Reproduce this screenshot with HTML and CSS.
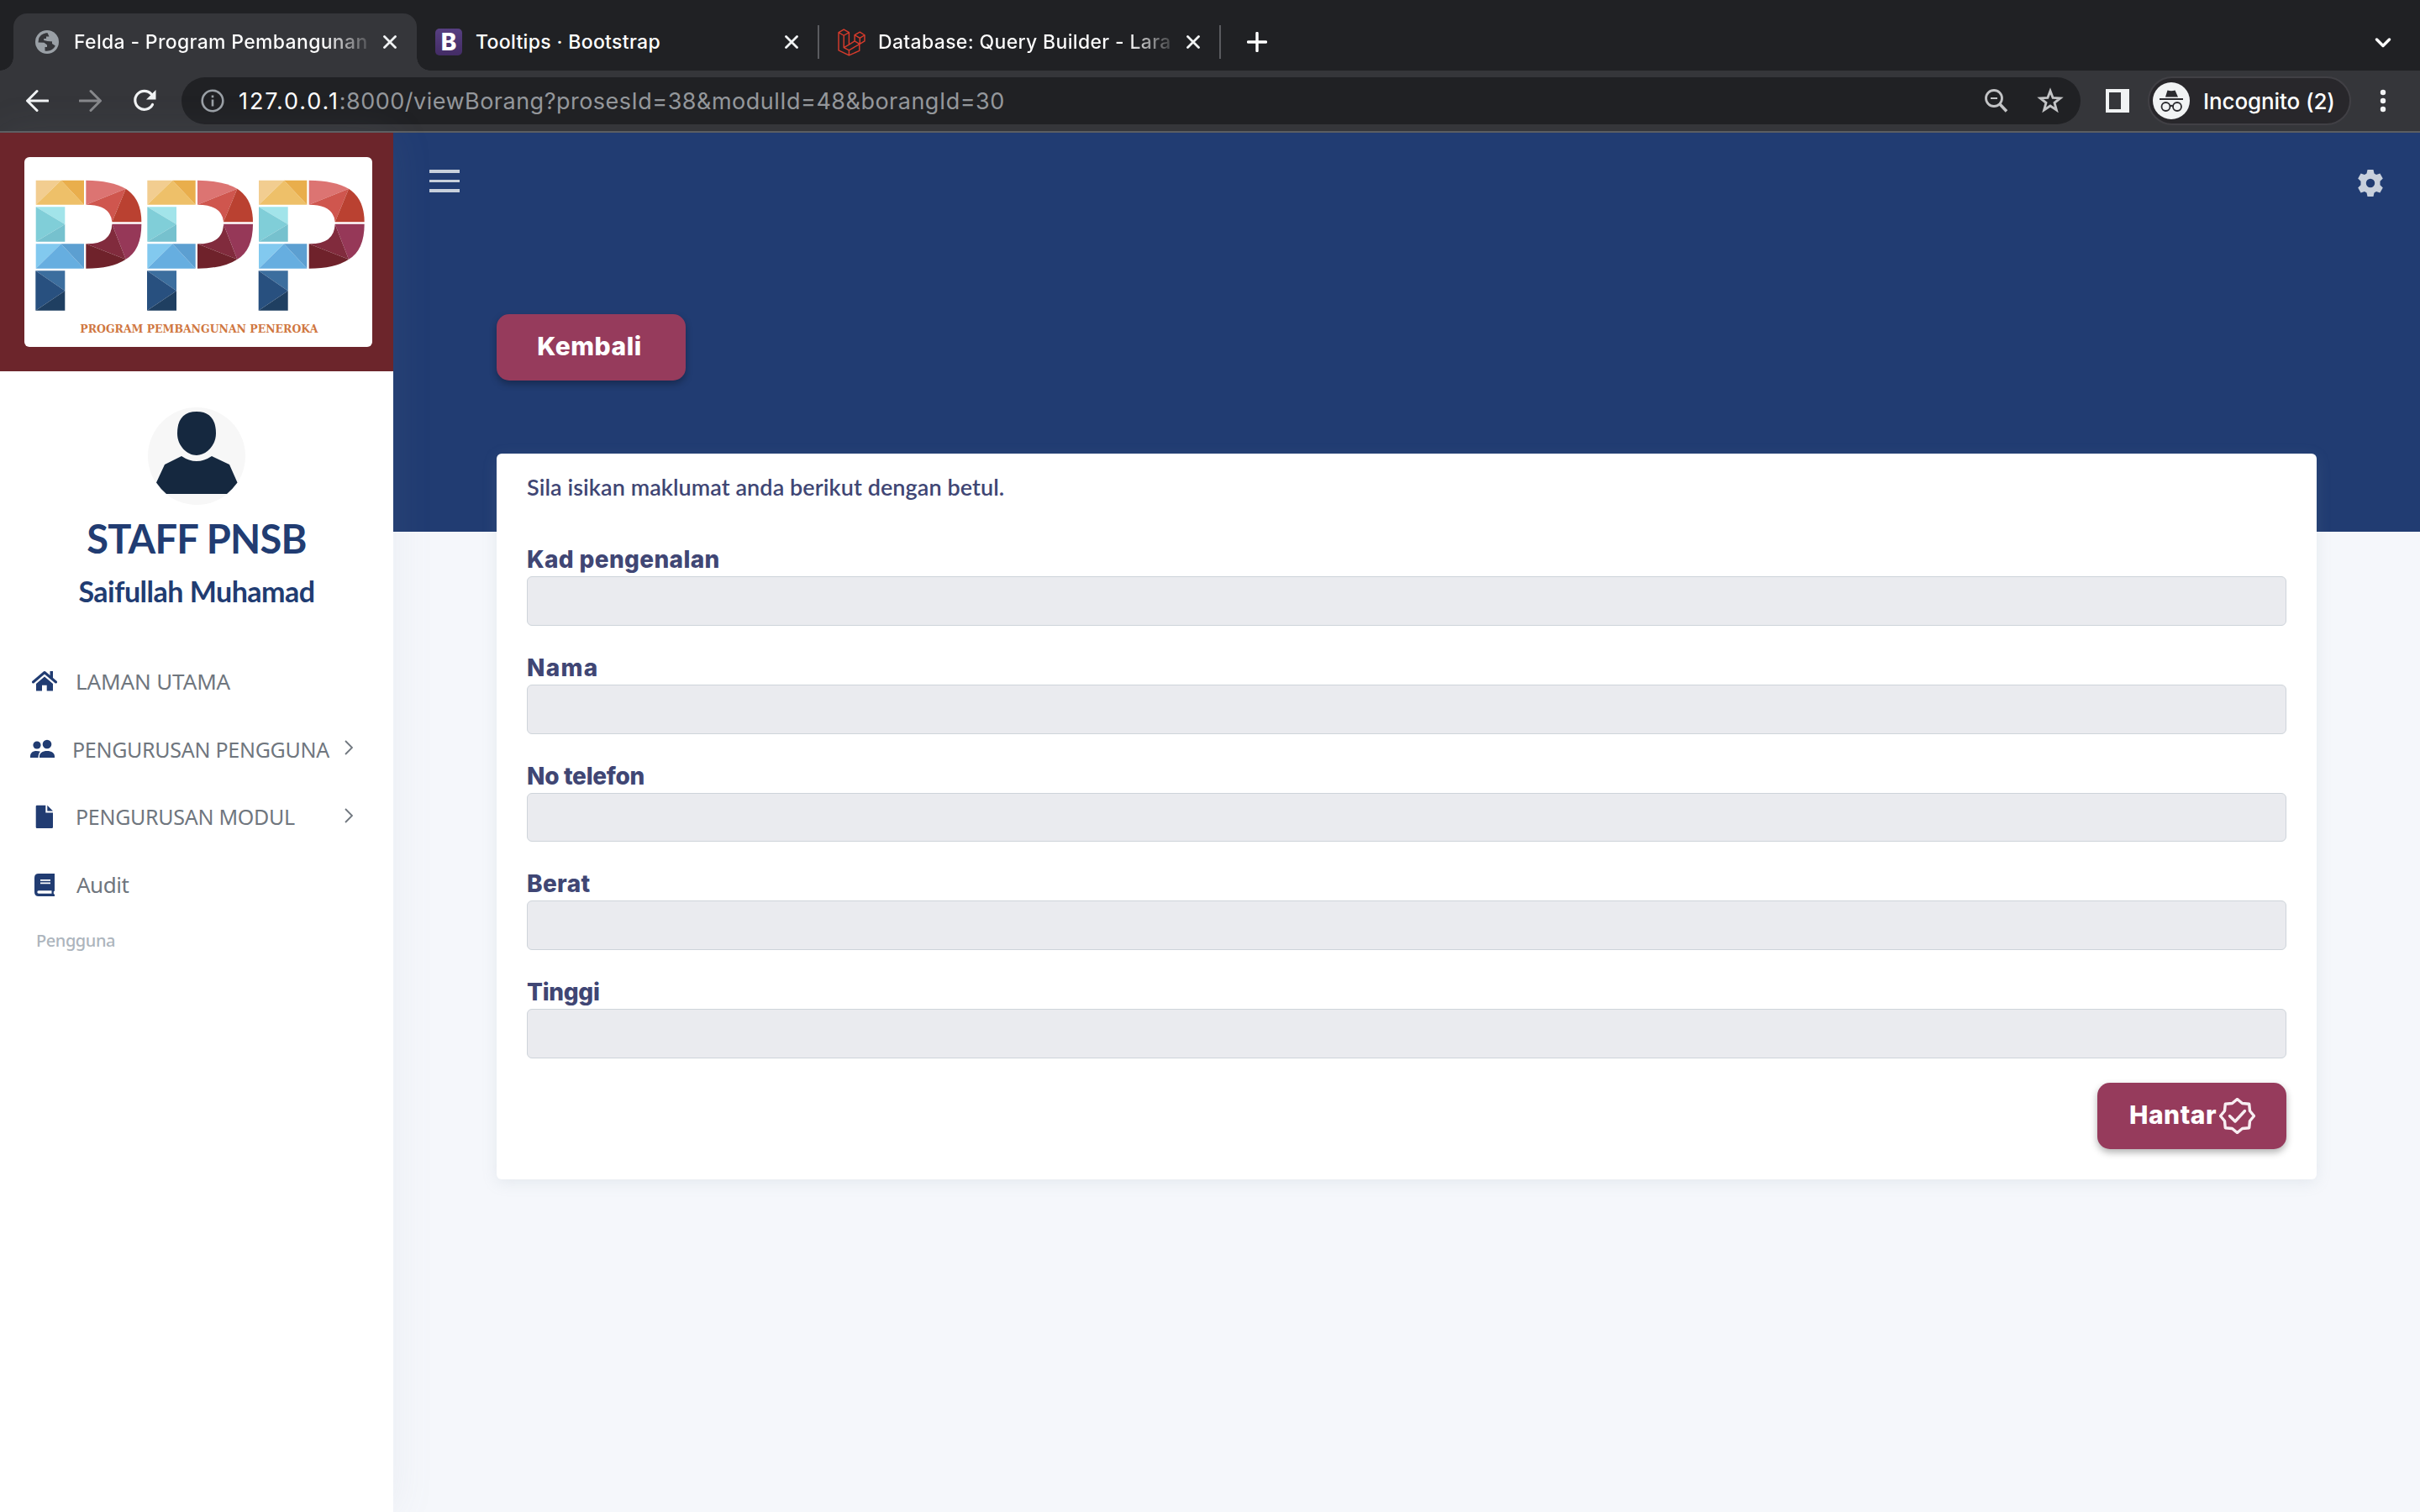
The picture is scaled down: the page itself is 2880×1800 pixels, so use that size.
FILE: index.html
```html
<!DOCTYPE html>
<html lang="ms">
<head>
<meta charset="utf-8">
<title>Felda - Program Pembangunan Peneroka</title>
<link rel="stylesheet" href="styles.css">
</head>
<body>
<div class="tabstrip">
  <div class="tab tab-active">
    <svg class="globe" viewBox="0 0 28 28"><circle cx="14" cy="14" r="14" fill="#9aa0a6"/><path d="M14.6 3.2C10 3.2 6 5.600 4.200 9.500L3.500 14.500L10.500 14.700L14 17.500V20H11.500V24.500C17 25.600 22 22.500 23.800 18.500L20 16V13H14.500L10.200 12V10H13V7.500H16.500Z" fill="#35363a"/><path d="M14.500 13V10.500L17 9.500V7L16.500 3.200L20 5L24 9.500L24.800 14L21.500 16V13.500Z" fill="#9aa0a6"/></svg>
    <span class="tab-title fade">Felda - Program Pembangunan</span>
    <svg class="close" viewBox="0 0 16 16"><path d="M1.500 1.500l13 13M14.500 1.500l-13 13"/></svg>
  </div>
  <div class="tab">
    <span class="bs-icon">B</span>
    <span class="tab-title">Tooltips · Bootstrap</span>
    <svg class="close" viewBox="0 0 16 16"><path d="M1.500 1.500l13 13M14.500 1.500l-13 13"/></svg>
  </div>
  <span class="sep"></span>
  <div class="tab tab-laravel">
    <svg class="laravel" viewBox="0 0 32 32"><path d="M1 4.500L7 1l6 3.500v14l6.500-4V7.500L25.500 4l5.500 3.500v7l-6 3.500v7.500L13 31 1 25zM1 4.500l6 3.500 6-3.500M7 8v14l6 3 12-7M13 25v6M7 22l6-3.500M19.500 7.500l6 3.500 5.500-3.500M25.500 11v7l-6-3.500"/></svg>
    <span class="tab-title fade">Database: Query Builder - Lara</span>
    <svg class="close" viewBox="0 0 16 16"><path d="M1.500 1.500l13 13M14.500 1.500l-13 13"/></svg>
  </div>
  <span class="sep"></span>
  <svg class="plus" viewBox="0 0 24 24"><path d="M12 1.500v21M1.500 12h21"/></svg>
  <svg class="tab-search" viewBox="0 0 20 12"><path d="M2.500 2l7.500 7.500L17.500 2"/></svg>
</div>
<div class="toolbar">
  <svg class="nav-icon" viewBox="0 0 28 28"><path d="M27 14H3M14 2.500L2.500 14 14 25.500" stroke="#f1f3f4"/></svg>
  <svg class="nav-icon" viewBox="0 0 28 28"><path d="M1 14h24M14 2.500L25.500 14 14 25.500" stroke="#87888b"/></svg>
  <svg class="nav-icon" viewBox="0 0 28 28"><path d="M23.500 18.500A11 11 0 1 1 22 6" stroke="#f1f3f4" stroke-width="3.200"/><path d="M27.500 1v11.500H16z" fill="#f1f3f4" stroke="none"/></svg>
  <div class="omnibox">
    <svg class="info" viewBox="0 0 28 28"><circle cx="14" cy="14" r="12.300"/><path d="M14 12.500v8M14 7.500v2.800"/></svg>
    <span class="url"><b>127.0.0.1</b>:8000/viewBorang?prosesId=38&amp;modulId=48&amp;borangId=30</span>
    <svg class="mag" viewBox="0 0 28 28"><circle cx="11" cy="11" r="9.500"/><path d="M7 11h8" stroke-width="2"/><path d="M18 18l8 8.500" stroke-width="3.500"/></svg>
    <svg class="star" viewBox="0 0 30 30"><path d="M15 4l2.900 7.700 8.200.4-6.400 5.100 2.200 8L15 20.700l-6.900 4.500 2.200-8-6.400-5.100 8.200-.4z"/></svg>
  </div>
  <svg class="panel" viewBox="0 0 28 28"><path d="M0 0h28v28H0zM4 4v20h14V4z" fill="#f1f3f4" fill-rule="evenodd"/></svg>
  <div class="profile">
    <svg viewBox="0 0 44 44"><circle cx="22" cy="22" r="22" fill="#f1f3f4"/><g fill="#2b2b2f"><path d="M15 17.500L17.500 9.500Q22 11 26.500 9.500L30 17.500z"/><path d="M8 19h28v2H8z"/></g><g fill="none" stroke="#2b2b2f" stroke-width="1.800"><circle cx="15.500" cy="29" r="5"/><circle cx="29" cy="29" r="5"/><path d="M20.500 28.500q1.700-1.500 3.500 0"/></g></svg>
    <span>Incognito (2)</span>
  </div>
  <svg class="dots" viewBox="0 0 8 28"><circle cx="4" cy="4" r="3.200"/><circle cx="4" cy="14" r="3.200"/><circle cx="4" cy="24" r="3.200"/></svg>
</div>
<div class="page">
  <aside class="sidebar">
    <div class="brand">
      <svg class="logo" viewBox="87 93 1242 678">
        <defs><g id="p">
          <path fill="#f2cd90" d="M128 176h90l-90 87z"/><path fill="#eec069" d="M218 176l82 87H128z"/><path fill="#e9ae4c" d="M218 176h82v87z"/>
          <path fill="#a2e4ea" d="M128 271h104v62z"/><path fill="#80ced8" d="M128 271l104 62-104 62z"/><path fill="#76c1ce" d="M232 333v62H128z"/>
          <path fill="#82c9ef" d="M128 403h90l-90 88z"/><path fill="#66aee0" d="M218 403l82 88H128z"/><path fill="#5c9fd1" d="M218 403h82v88z"/>
          <path fill="#3c6e9e" d="M127 499h105v72z"/><path fill="#28507f" d="M127 499l105 72-105 70z"/><path fill="#1f3f61" d="M232 571v70H127z"/>
          <path fill="#dc7472" d="M307 176Q399 177 449 206L307 263z"/><path fill="#cf564e" d="M449 206L400 325Q395 263 307 263z"/><path fill="#ba4131" d="M449 206Q505 242 505 325H400z"/>
          <path fill="#963858" d="M505 332H400l49 126Q505 425 505 332z"/><path fill="#812b3d" d="M400 332l49 126-142-55Q398 404 400 332z"/><path fill="#6f222b" d="M307 403l142 55Q399 491 307 491z"/>
        </g></defs>
        <use href="#p"/><use href="#p" x="398"/><use href="#p" x="796"/>
        <text class="logo-text" x="286" y="720" textLength="849" lengthAdjust="spacingAndGlyphs">PROGRAM PEMBANGUNAN PENEROKA</text>
      </svg>
    </div>
    <svg class="avatar" viewBox="0 0 116 116"><circle cx="58" cy="58" r="58" fill="#f7f7f7"/><path fill="#15283f" d="M58 5C74 5 81 15 81 31C81 46 69 57 58 57C47 57 35 46 35 31C35 15 42 5 58 5zM40 58Q58 70 76 58L97 68L106.500 89.500Q101 97 94 103H22Q15 97 10 89.500L20 68z"/></svg>
    <h1 class="role">STAFF PNSB</h1>
    <h2 class="user">Saifullah Muhamad</h2>
    <nav class="menu">
      <a class="item"><svg class="icon" viewBox="0 0 32 32"><path d="M23.500 4H27v9l-3.500-3z"/><path d="M3.500 17L17 5.500 30.500 17" fill="none" stroke="#213c72" stroke-width="3" stroke-linecap="round" stroke-linejoin="round"/><path d="M17 10.500L27 19v8.500h-7.300v-6.800H14v6.800H7V19z"/></svg><span>LAMAN UTAMA</span></a>
      <a class="item item-users"><svg class="icon" viewBox="0 0 32 32"><circle cx="8" cy="11" r="4.600"/><circle cx="20" cy="10" r="5.300"/><path d="M0 26v-1.500C0 20 3.500 18 7 18q3 0 5 .8Q9.500 21 9.500 26zM11 26v-1.500c0-4 3.500-6.500 9-6.500s9 2.500 9 6.500V26z"/></svg><span>PENGURUSAN PENGGUNA</span><svg class="chev" viewBox="0 0 10 18"><path d="M1 1l8 8-8 8"/></svg></a>
      <a class="item item-modul"><svg class="icon" viewBox="0 0 32 32"><path d="M8 2.700h10.300v8.800h8.700v17.200q0 1.300-1.300 1.300H8q-1.300 0-1.300-1.300V4q0-1.300 1.300-1.300zM20.300 2.700L27 9.500h-6.700z"/></svg><span>PENGURUSAN MODUL</span><svg class="chev" viewBox="0 0 10 18"><path d="M1 1l8 8-8 8"/></svg></a>
      <a class="item item-audit"><svg class="icon" viewBox="0 0 32 32"><path fill-rule="evenodd" d="M10 3h19v20.500l-1.200 1v2.200L29 28v2H10q-5 0-5-5V8q0-5 5-5zM12 10v1.800h12V10zM12 13.500v1.800h12v-1.800zM10 23.300q-1.700 0-1.700 1.700T10 26.700h15.500v-3.400z"/></svg><span>Audit</span></a>
    </nav>
    <div class="menu-heading">Pengguna</div>
  </aside>
  <main class="main">
    <header class="hero">
      <div class="topbar">
        <div class="burger"><i></i><i></i><i></i></div>
        <svg class="gear" viewBox="0 0 30 32"><path fill-rule="evenodd" d="M11.500 0h7l1 4.500 2.500 1.400 4.400-1.400 3.400 6-3.300 3.200v4.600l3.300 3.200-3.400 6-4.400-1.400-2.500 1.400-1 4.500h-7l-1-4.500L8 26.100l-4.400 1.400-3.400-6 3.300-3.200v-4.600L.2 10.500l3.400-6L8 5.900l2.500-1.400zM15 10.800a5.200 5.200 0 1 0 0 10.400 5.200 5.200 0 0 0 0-10.400z"/></svg>
      </div>
      <button class="btn">Kembali</button>
    </header>
    <section class="card">
      <p class="lead">Sila isikan maklumat anda berikut dengan betul.</p>
      <form class="form">
        <div class="field"><label>Kad pengenalan</label><input disabled></div>
        <div class="field wide"><label>Nama</label><input disabled></div>
        <div class="field tight"><label>No telefon</label><input disabled></div>
        <div class="field"><label>Berat</label><input disabled></div>
        <div class="field tight"><label>Tinggi</label><input disabled></div>
      </form>
      <button class="btn btn-submit" type="button"><span>Hantar</span><svg viewBox="-21.500 -21.500 43 43"><path d="M0-20L6-15 14.200-14.200 15-6 20 0 15 6 14.200 14.200 6 15 0 20-6 15-14.200 14.200-15 6-20 0-15-6-14.200-14.200-6-15z"/><path d="M-9 0l6.500 6.500L9-6"/></svg></button>
    </section>
  </main>
</div>
</body>
</html>
```
FILE: styles.css
```css
* { box-sizing: border-box; }
body {
  margin: 0;
  width: 2880px;
  height: 1800px;
  overflow: hidden;
  display: flex;
  flex-direction: column;
  font-family: Inter, sans-serif;
  background: #f5f7fb;
}
svg { display: block; flex: none; }

/* Browser tabs */
.tabstrip {
  height: 84px;
  flex: none;
  padding: 16px 35px 0 16px;
  display: flex;
  align-items: center;
  background: #202124;
}
.tab {
  position: relative;
  width: 477px;
  height: 68px;
  padding: 0 23px 0 22px;
  display: flex;
  align-items: center;
  color: #fff;
}
.tab-active {
  width: 480px;
  padding: 0 24px 0 26px;
  background: #35363a;
  border-radius: 16px 16px 0 0;
}
.tab-active::before,
.tab-active::after {
  content: "";
  position: absolute;
  bottom: 0;
  width: 16px;
  height: 16px;
}
.tab-active::before { left: -16px; background: radial-gradient(circle at 0 0, #202124 15.5px, #35363a 16px); }
.tab-active::after { right: -16px; background: radial-gradient(circle at 100% 0, #202124 15.5px, #35363a 16px); }
.globe { width: 28px; height: 28px; margin-right: 18px; }
.bs-icon {
  width: 32px;
  height: 32px;
  margin-right: 16px;
  border-radius: 5px;
  background: linear-gradient(#573f81, #432c65);
  font-weight: 800;
  font-size: 28px;
  line-height: 32px;
  text-align: center;
}
.laravel { width: 33px; height: 33px; margin-right: 15px; fill: none; stroke: #d63b2c; stroke-width: 1.4; stroke-linejoin: round; }
.tab-title {
  font-size: 23px;
  font-weight: 500;
  line-height: 32px;
  letter-spacing: 0.33px;
  white-space: nowrap;
}
.fade { color: transparent; background: linear-gradient(90deg, #fff 85%, rgba(255,255,255,.15)); background-clip: text; -webkit-background-clip: text; }
.close { width: 16px; height: 16px; margin-left: auto; fill: none; stroke: #f1f3f4; stroke-width: 2.8; stroke-linecap: round; }
.sep { width: 2px; height: 40px; background: #5a5b5f; }
.tab-laravel { width: 476px; }
.plus { width: 24px; height: 24px; margin-left: 31px; stroke: #fff; stroke-width: 3.4; stroke-linecap: round; }
.tab-search { width: 20px; height: 12px; margin: 2px -1px 0 auto; fill: none; stroke: #fff; stroke-width: 3.4; stroke-linecap: round; stroke-linejoin: round; }

/* Browser toolbar */
.toolbar {
  height: 74px;
  flex: none;
  padding: 0 40px 0 30px;
  display: flex;
  align-items: center;
  background: #35363a;
  border-bottom: 2px solid #5c5e61;
}
.nav-icon { width: 28px; height: 28px; margin-right: 36px; fill: none; stroke-width: 3; stroke-linecap: round; stroke-linejoin: round; }
.nav-icon:nth-child(3) { margin-right: 30px; }
.omnibox {
  width: 2260px;
  height: 56px;
  padding: 0 20px 0 23px;
  display: flex;
  align-items: center;
  border-radius: 28px;
  background: #202124;
}
.info { width: 28px; height: 28px; fill: none; stroke: #9aa0a6; stroke-width: 2.6; }
.url { margin-left: 17px; padding-top: 1px; font-size: 27px; line-height: 40px; letter-spacing: 0.49px; color: #94979b; white-space: nowrap; }
.url b { font-weight: 400; letter-spacing: 1.9px; color: #fff; }
.mag { width: 28px; height: 28px; margin-left: auto; fill: none; stroke: #c3c4c6; stroke-width: 2.8; }
.star { width: 32px; height: 32px; margin-left: 34px; fill: none; stroke: #c3c4c6; stroke-width: 2.7; }
.panel { width: 28px; height: 28px; margin-left: 30px; }
.profile {
  width: 242px;
  height: 58px;
  margin: 0 34px 0 22px;
  padding-left: 4px;
  display: flex;
  align-items: center;
  border: 2px solid #414045;
  border-radius: 29px;
  background: #28272b;
  color: #fff;
  font-size: 26px;
  font-weight: 500;
  letter-spacing: -0.1px;
}
.profile svg { width: 44px; height: 44px; margin-right: 16px; }
.dots { width: 8px; height: 28px; fill: #f1f3f4; }

/* Page */
.page { flex: 1; display: flex; }
.sidebar {
  width: 468px;
  flex: none;
  display: flex;
  flex-direction: column;
  background: #fff;
  box-shadow: 0 0 48px rgba(136, 152, 170, .1);
  z-index: 1;
}
.brand { height: 284px; padding: 29px; background: #6c252b; }
.logo { width: 414px; height: 226px; border-radius: 6px; background: #fff; }
.logo-text { font: 700 37px "DejaVu Serif", serif; fill: #d07741; }
.avatar { width: 116px; height: 116px; margin: 43px auto 0; }
.role, .user { margin: 0; font-family: Lato, sans-serif; font-weight: 700; text-align: center; color: #213c72; }
.role { margin-top: 10px; font-size: 47px; line-height: 60px; letter-spacing: -0.75px; }
.user { margin-top: 13px; font-size: 34px; line-height: 40px; letter-spacing: -0.5px; }
.menu { margin-top: 47px; font-family: "Noto Sans", sans-serif; }
.item {
  height: 80.6px;
  padding: 0 48px 0 36px;
  display: flex;
  align-items: center;
  color: #6f767e;
  font-size: 26px;
  white-space: nowrap;
  letter-spacing: -0.12px;
}
.icon { width: 32px; height: 32px; margin-right: 22px; fill: #213c72; }
.item-users, .item-modul { font-size: 25px; letter-spacing: -0.28px; }
.item-users .icon { margin-right: 18px; }
.item-audit { letter-spacing: -0.5px; }
.item-audit .icon { margin-right: 23px; }
.chev { width: 10px; height: 18px; margin: -3px 0 0 auto; fill: none; stroke: #6f767e; stroke-width: 1.8; }
.menu-heading {
  padding-left: 43px;
  font: 500 20px/54px "Noto Sans", sans-serif;
  letter-spacing: -0.44px;
  color: #adb5bd;
}
.main { flex: 1; display: flex; flex-direction: column; }
.hero { height: 475px; padding: 44px 44px 0 43px; background: #213c72; }
.topbar { display: flex; justify-content: space-between; height: 172px; }
.burger { display: flex; flex-direction: column; justify-content: space-between; width: 36px; height: 27px; }
.burger i { height: 4px; background: #c8d0dc; }
.burger i:nth-child(2) { height: 3px; }
.gear { width: 30px; height: 32px; fill: #c8d0dc; }
.btn {
  width: 225px;
  height: 79px;
  margin-left: 80px;
  padding: 0 4px 3px 0;
  border: 0;
  border-radius: 15px;
  background: #963b5c;
  box-shadow: 0 4px 8px rgba(0, 0, 0, .3);
  color: #fff;
  font: 800 30px Inter, sans-serif;
  letter-spacing: 0.5px;
}
.card {
  width: 2166px;
  height: 864px;
  margin: -93px 0 0 123px;
  padding: 20px 36px 36px;
  display: flex;
  flex-direction: column;
  border-radius: 6px;
  background: #fff;
  box-shadow: 0 4px 18px rgba(136, 152, 170, .15);
  color: #404674;
}
.lead { margin: 0 0 46px; font: 600 27px/40px Lato, sans-serif; letter-spacing: 0.07px; }
.form { display: flex; flex-direction: column; gap: 30px; }
.field { display: flex; flex-direction: column; }
.field label { font-size: 28px; font-weight: 800; line-height: 40px; letter-spacing: 0.35px; }
.field.wide label { letter-spacing: 1.3px; }
.field.tight label { letter-spacing: -0.3px; }
.field input { width: 100%; height: 58.8px; padding: 0; border: 1px solid #ced4da; border-radius: 6px; background: #eaebef; }
.btn-submit {
  margin: 29px 0 0;
  align-self: flex-end;
  flex: none;
  padding: 0 0 0 38px;
  display: flex;
  align-items: center;
}
.btn-submit span { width: 103px; padding-bottom: 3px; text-align: left; }
.btn-submit svg { width: 43px; height: 43px; margin-left: 4px; fill: none; stroke: #f8eef2; stroke-width: 3.4; stroke-linecap: round; stroke-linejoin: round; }
```
